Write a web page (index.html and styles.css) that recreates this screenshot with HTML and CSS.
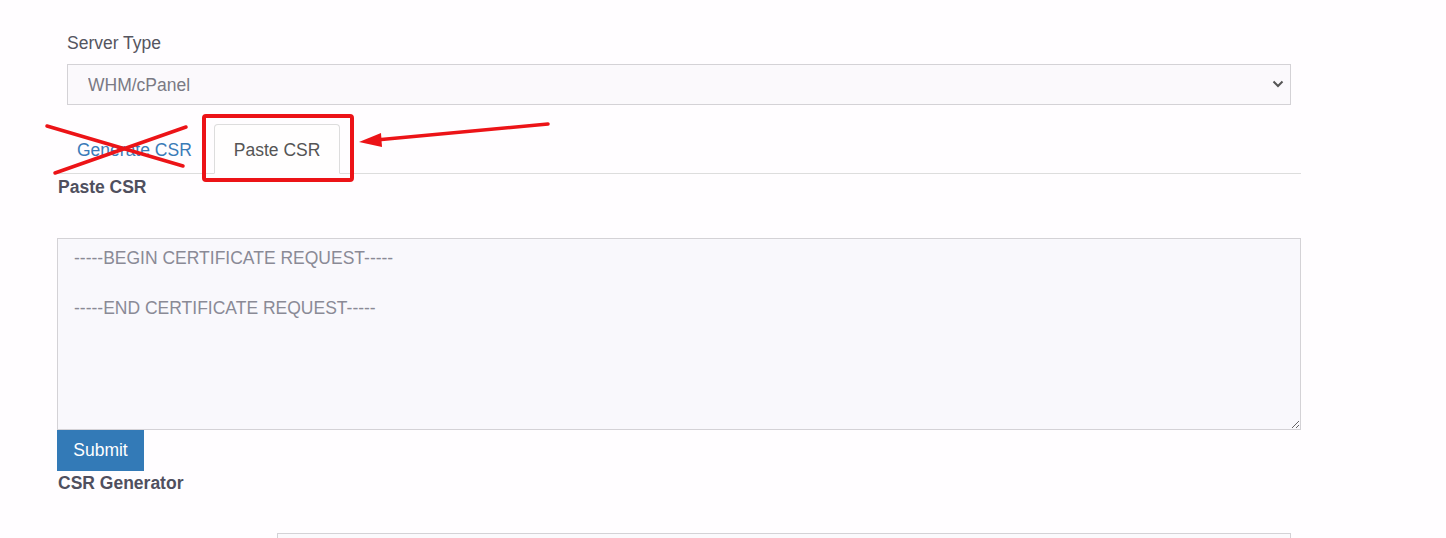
FILE: index.html
```html
<!DOCTYPE html>
<html lang="en">
<head>
<meta charset="utf-8">
<title>SSL CSR</title>
<link rel="stylesheet" href="styles.css">
</head>
<body>
<main class="page">
  <div class="server">
    <label class="server-label" for="server-type">Server Type</label>
    <div class="select-wrap">
      <select id="server-type" class="select">
        <option>WHM/cPanel</option>
      </select>
      <svg class="chevron" width="12" height="8" viewBox="0 0 12 8"><path d="M1.5 1.5 L6 6 L10.5 1.5" fill="none" stroke="#555" stroke-width="2"/></svg>
    </div>
  </div>

  <ul class="tabs">
    <li class="tab"><a class="tab-link">Generate CSR</a></li>
    <li class="tab active"><a class="tab-link">Paste CSR</a></li>
  </ul>

  <section class="pane">
    <h4 class="pane-title">Paste CSR</h4>
    <textarea class="csr" placeholder="-----BEGIN CERTIFICATE REQUEST-----

-----END CERTIFICATE REQUEST-----"></textarea>
    <button class="btn" type="button">Submit</button>
    <h4 class="pane-title gen">CSR Generator</h4>
    <div class="row">
      <input class="input" type="text">
    </div>
  </section>
</main>

<svg class="annot" width="1446" height="538" viewBox="0 0 1446 538">
  <g stroke="#ec1317" stroke-width="3.5" stroke-linecap="round" fill="none">
    <line x1="47" y1="126" x2="183" y2="166"/>
    <line x1="55" y1="173" x2="186" y2="127"/>
    <rect x="204" y="116" width="148" height="64" rx="2" stroke-width="4"/>
    <line x1="548" y1="124" x2="376" y2="140"/>
  </g>
  <polygon points="359,142 381,133 382,147" fill="#ec1317"/>
</svg>
</body>
</html>
```

FILE: styles.css
```css
html, body {
  margin: 0;
  padding: 0;
  overflow: hidden;
}

body {
  background: #fffdff;
  font-family: "Liberation Sans", Arial, sans-serif;
  font-size: 17.5px;
  color: #555;
  width: 1446px;
  height: 538px;
  position: relative;
}

.page {
  width: 1244px;
  margin-left: 57px;
  padding-top: 31px;
}

.server {
  padding: 0 10px;
}

.server-label {
  display: block;
  line-height: 24px;
  margin-bottom: 9px;
  color: #555560;
}

.select-wrap {
  position: relative;
}

.select {
  display: block;
  width: 100%;
  height: 41px;
  box-sizing: border-box;
  border: 1px solid #d4d2d6;
  border-radius: 0;
  background: #fbf9fc;
  color: #7a7a84;
  font-family: inherit;
  font-size: 17.5px;
  padding: 0 20px;
  appearance: none;
  -webkit-appearance: none;
  outline: none;
}

.chevron {
  position: absolute;
  right: 7px;
  top: 16px;
}

.tabs {
  list-style: none;
  margin: 19px 0 0 0;
  padding: 0;
  display: flex;
  border-bottom: 1px solid #ddd;
}

.tab {
  margin-bottom: -1px;
}

.tab-link {
  display: block;
  height: 50px;
  line-height: 50px;
  padding: 0 19px;
  color: #3a7bb8;
  border: 1px solid transparent;
  border-radius: 4px 4px 0 0;
  box-sizing: border-box;
}

.tab.active .tab-link {
  color: #555;
  background: #fffefe;
  border-color: #ddd;
  border-bottom-color: transparent;
  padding: 0 19px;
  margin-left: 2px;
}

.pane-title {
  margin: 2px 0 0 1px;
  font-size: 17.5px;
  font-weight: bold;
  line-height: 22px;
  color: #4f4f5e;
}

.csr {
  display: block;
  width: 1244px;
  height: 192px;
  box-sizing: border-box;
  margin-top: 40px;
  border: 1px solid #d4d2d6;
  background: #f9f8fc;
  font-family: inherit;
  font-size: 17.5px;
  line-height: 25px;
  padding: 7px 16px 5px;
  color: #555;
  outline: none;
}

.csr::placeholder {
  color: #8a8a96;
}

.btn {
  display: block;
  height: 41px;
  width: 87px;
  border: 0;
  margin: 0;
  background: #337ab7;
  color: #fff;
  font-family: inherit;
  font-size: 17.5px;
  padding: 0;
}

.pane-title.gen {
  margin-top: 1px;
}

.row {
  padding-left: 220px;
  padding-right: 10px;
  margin-top: 39px;
}

.input {
  display: block;
  width: 100%;
  height: 30px;
  box-sizing: border-box;
  border: 1px solid #d4d2d6;
  background: #fbf9fc;
}

.annot {
  position: absolute;
  top: 0;
  left: 0;
  pointer-events: none;
}
```
